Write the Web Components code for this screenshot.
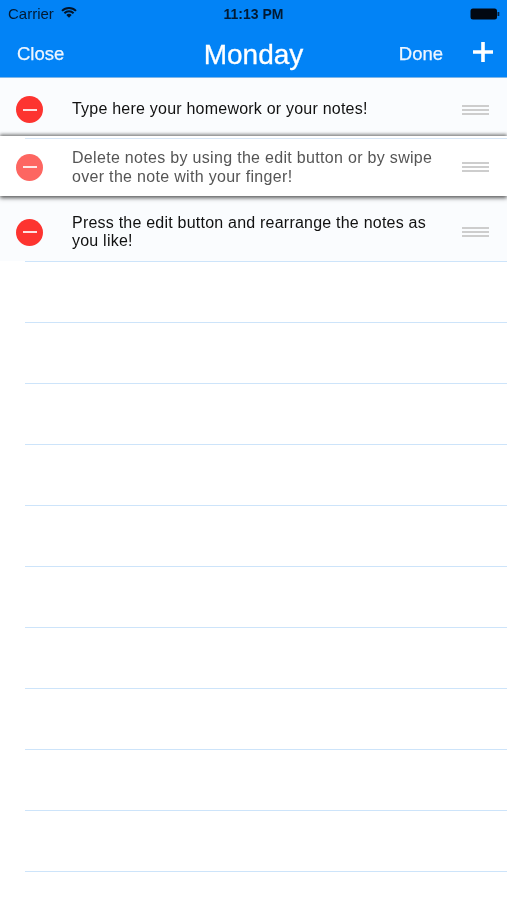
<!DOCTYPE html>
<html>
<head>
<meta charset="utf-8">
<title>Monday</title>
<style>
  html, body { margin: 0; padding: 0; background: #fff; }
  body { width: 507px; height: 900px; overflow: hidden; font-family: "Liberation Sans", Arial, sans-serif; filter: blur(0.4px); }
</style>
</head>
<body>
<notes-header day="Monday"></notes-header>
<note-list>
  <note-row first>Type here your homework or your notes!</note-row>
  <note-row lifted>Delete notes by using the edit button or by swipe over the note with your finger!</note-row>
  <note-row tall>Press the edit button and rearrange the notes as you like!</note-row>
</note-list>
<ruled-paper lines="10"></ruled-paper>

<script>
// Blue status bar and navigation bar
class NotesHeader extends HTMLElement {
  constructor() {
    super();
    this.attachShadow({ mode: "open" });
  }

  connectedCallback() {
    const day = this.getAttribute("day");
    this.shadowRoot.innerHTML = `
      <style>
        :host {
          display: block;
          height: 77px;
          background: #0283f6;
          border-bottom: 1px solid #7fb6e8;
          color: #fff;
        }
        .status {
          height: 27px;
          display: grid;
          grid-template-columns: 1fr auto 1fr;
          align-items: center;
          padding: 0 8px;
          color: #021a33;
          font-size: 15px;
        }
        .carrier { display: flex; align-items: center; gap: 7px; }
        .carrier svg { margin-top: -3px; }
        .time { font-weight: bold; font-size: 14px; color: #021a33; }
        .battery { justify-self: end; display: flex; align-items: center; margin-right: -1px; }
        .nav {
          height: 50px;
          display: flex;
          align-items: center;
          padding: 0 13px 0 17px;
        }
        .btn { font-size: 18.5px; color: #eef6ff; -webkit-text-stroke: 0.25px #eef6ff; padding-top: 4px; }
        .title {
          position: absolute;
          left: 0;
          width: 507px;
          top: 37px;
          text-align: center;
          font-size: 28px;
          line-height: 36px;
          -webkit-text-stroke: 0.3px #fff;
        }
        .done { margin-left: auto; margin-right: 29px; }
        svg { display: block; }
      </style>
      <div class="status">
        <div class="carrier">
          <span>Carrier</span>
          <svg width="16" height="11" viewBox="0 0 16 11">
            <path d="M1 3.9a10 10 0 0 1 14 0" fill="none" stroke="#01142a" stroke-width="2"/>
            <path d="M3.4 6.2a6.6 6.6 0 0 1 9.2 0" fill="none" stroke="#01142a" stroke-width="2"/>
            <path d="M5.3 8a3.8 3.8 0 0 1 5.4 0L8 10.8z" fill="#01142a"/>
          </svg>
        </div>
        <span class="time">11:13 PM</span>
        <div class="battery">
          <svg width="30" height="12" viewBox="0 0 30 12">
            <rect x="0.5" y="0.5" width="26.5" height="11" rx="2.5" fill="#020812"/>
            <rect x="27.5" y="4" width="1.8" height="4" fill="#04213f"/>
          </svg>
        </div>
      </div>
      <div class="nav">
        <span class="btn">Close</span>
        <span class="title">${day}</span>
        <span class="btn done">Done</span>
        <svg width="22" height="22" viewBox="0 0 22 22">
          <path d="M11 1v20M1 11h20" stroke="#fff" stroke-width="3.6" fill="none"/>
        </svg>
      </div>
    `;
  }
}

// Wrapper for the note rows
class NoteList extends HTMLElement {
  constructor() {
    super();
    this.attachShadow({ mode: "open" });
    this.shadowRoot.innerHTML = `
      <style>
        :host { display: block; }
      </style>
      <slot></slot>
    `;
  }
}

// One note in edit mode: delete badge, text and drag handle
class NoteRow extends HTMLElement {
  constructor() {
    super();
    this.attachShadow({ mode: "open" });
    this.shadowRoot.innerHTML = `
      <style>
        :host {
          display: flex;
          align-items: center;
          padding-left: 16px;
          background: #fafcfe;
          color: #111;
          font-size: 16px;
          line-height: 18.5px;
          letter-spacing: 0.22px;
          box-sizing: border-box;
        }
        :host([first]) { height: 58px; padding-top: 5px; }
        :host([lifted]) {
          position: relative;
          height: 60px;
          padding-top: 2px;
          background: #fff;
          color: #555;
          line-height: 19px;
          letter-spacing: 0.31px;
          box-shadow: 0 -2px 3px rgba(70,70,70,.55), 0 2px 4px rgba(50,50,50,.8);
        }
        :host([lifted])::before {
          content: "";
          position: absolute;
          left: 25px;
          right: 0;
          top: 2px;
          height: 1px;
          background: #d6e6f7;
        }
        :host([tall]) { height: 65px; padding-top: 7px; }
        .minus {
          flex: none;
          width: 27px;
          height: 27px;
          border-radius: 50%;
          background: #fd3430;
          display: flex;
          align-items: center;
          justify-content: center;
        }
        :host([lifted]) .minus { background: #fd6661; }
        .minus i {
          display: block;
          width: 14px;
          height: 2px;
          background: #fff;
          opacity: .85;
        }
        .text {
          width: 372px;
          margin-left: 29px;
        }
        .handle {
          margin-left: 18px;
          width: 27px;
          height: 10px;
          border-top: 2px solid #cdcdcd;
          border-bottom: 2px solid #cdcdcd;
          position: relative;
          box-sizing: border-box;
        }
        .handle::after {
          content: "";
          position: absolute;
          left: 0;
          right: 0;
          top: 2px;
          height: 2px;
          background: #cdcdcd;
        }
      </style>
      <span class="minus"><i></i></span>
      <div class="text"><slot></slot></div>
      <div class="handle"></div>
    `;
  }
}

// Empty ruled lines under the notes
class RuledPaper extends HTMLElement {
  constructor() {
    super();
    this.attachShadow({ mode: "open" });
  }

  connectedCallback() {
    const count = Number(this.getAttribute("lines"));
    let rows = '<div class="line first"></div>';
    for (let i = 0; i < count; i++) {
      rows += '<div class="line"></div>';
    }
    this.shadowRoot.innerHTML = `
      <style>
        :host { display: block; padding-left: 25px; }
        .line { height: 60px; border-bottom: 1px solid #cde4fa; }
        .first { height: 0; }
      </style>
      ${rows}
    `;
  }
}

customElements.define("notes-header", NotesHeader);
customElements.define("note-list", NoteList);
customElements.define("note-row", NoteRow);
customElements.define("ruled-paper", RuledPaper);
</script>
</body>
</html>
